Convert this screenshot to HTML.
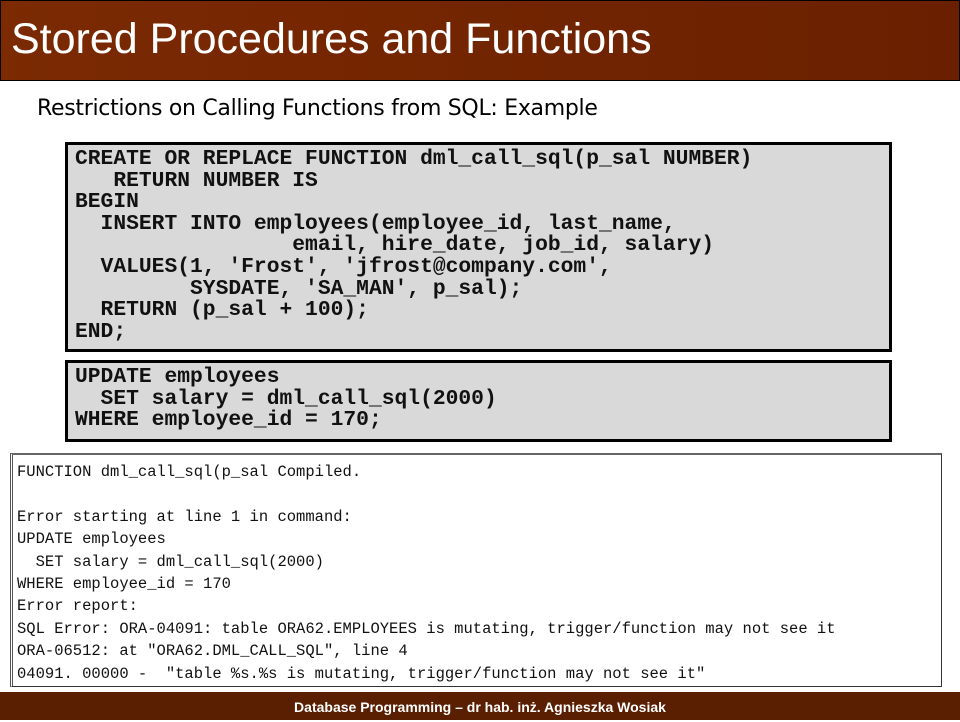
<!DOCTYPE html>
<html><head><meta charset="utf-8"><style>
body{margin:0;width:960px;height:720px;position:relative;background:#fff;overflow:hidden}
.title{position:absolute;left:0;top:0;width:958px;height:79px;border:1px solid #000;background:linear-gradient(90deg,#7b2a02,#6a2000);}
.title span{position:absolute;left:10px;top:14px;font:43px "Liberation Sans",sans-serif;color:#fff;white-space:nowrap}
.sub{position:absolute;left:37px;top:96px;font:22px "DejaVu Sans","Liberation Sans",sans-serif;color:#000;letter-spacing:-0.3px;white-space:nowrap}
.code{position:absolute;left:65px;width:814px;background:#d9d9d9;border:3px solid #000;font:bold 21.3px/21.6px "Liberation Mono",monospace;white-space:pre;color:#111;padding:4px 0 0 7px;box-sizing:content-box}
.out{position:absolute;left:10px;top:453px;width:932px;height:234px;border:1px solid #333;border-left:3px double #555;border-top:2px solid #666;background:#fff;font:15.5px/22.4px "Liberation Mono",monospace;white-space:pre;color:#111;padding:6px 0 0 4px;box-sizing:border-box}
.foot{position:absolute;left:0;top:692px;width:960px;height:28px;background:#5a1e01;color:#fff;font:bold 14px "Liberation Sans",sans-serif;text-align:center;line-height:30px}
</style></head><body>
<div class="title"><span>Stored Procedures and Functions</span></div>
<div class="sub">Restrictions on Calling Functions from SQL: Example</div>
<div class="code" style="top:142px;height:200px">CREATE OR REPLACE FUNCTION dml_call_sql(p_sal NUMBER)
   RETURN NUMBER IS
BEGIN
  INSERT INTO employees(employee_id, last_name,
                 email, hire_date, job_id, salary)
  VALUES(1, 'Frost', 'jfrost@company.com',
         SYSDATE, 'SA_MAN', p_sal);
  RETURN (p_sal + 100);
END;</div>
<div class="code" style="top:360px;height:72px">UPDATE employees
  SET salary = dml_call_sql(2000)
WHERE employee_id = 170;</div>
<div class="out">FUNCTION dml_call_sql(p_sal Compiled.

Error starting at line 1 in command:
UPDATE employees
  SET salary = dml_call_sql(2000)
WHERE employee_id = 170
Error report:
SQL Error: ORA-04091: table ORA62.EMPLOYEES is mutating, trigger/function may not see it
ORA-06512: at "ORA62.DML_CALL_SQL", line 4
04091. 00000 -  "table %s.%s is mutating, trigger/function may not see it"</div>
<div class="foot">Database Programming – dr hab. inż. Agnieszka Wosiak</div>
</body></html>
